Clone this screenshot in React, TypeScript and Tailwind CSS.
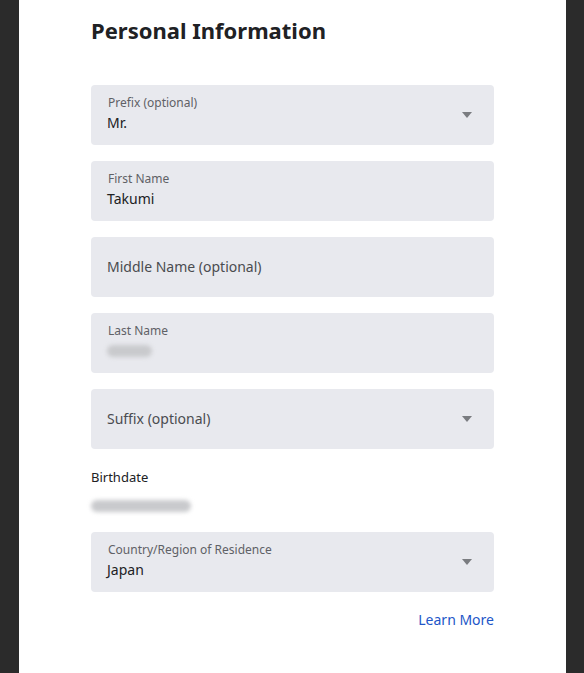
import { ReactNode } from "react";

function Caret() {
  return (
    <svg width="10" height="6" viewBox="0 0 10 6" className="shrink-0">
      <path d="M0 0h10L5 6z" fill="#7a7c80" />
    </svg>
  );
}

function Blur({ w }: { w: number }) {
  return (
    <span
      className="inline-block h-[12px] rounded-full bg-[#c9cacd] blur-[2px]"
      style={{ width: w }}
    />
  );
}

function Field({
  label,
  value,
  select,
}: {
  label?: string;
  value?: ReactNode;
  select?: boolean;
}) {
  return (
    <div className="h-[60px] rounded-[4px] bg-[#e8e9ee] pl-[16px] pr-[22px] flex items-center">
      <div className="flex-1 min-w-0">
        {value !== undefined ? (
          <>
            <p className="text-[12px] leading-[16px] text-[#5f6166] pl-px -mt-[2px]">{label}</p>
            <div className="text-[14px] leading-[20px] text-[#202124] mt-[2px] h-[20px] flex items-center">
              {value}
            </div>
          </>
        ) : (
          <p className="text-[14px] leading-[20px] text-[#4a4c50]">{label}</p>
        )}
      </div>
      {select && <Caret />}
    </div>
  );
}

export default function App() {
  return (
    <div className="min-h-[673px] bg-[#2b2b2b] pl-[19px] pr-[18px] flex font-['Noto_Sans',sans-serif]">
      <div className="flex-1 bg-white pl-[72px] pr-[72px] pt-[15px] pb-[40px]">
        <h1 className="text-[22px] leading-[30px] font-bold text-[#202124]">Personal Information</h1>
        <div className="mt-[40px] flex flex-col gap-[16px]">
          <Field label="Prefix (optional)" value="Mr." select />
          <Field label="First Name" value="Takumi" />
          <Field label="Middle Name (optional)" />
          <Field label="Last Name" value={<Blur w={45} />} />
          <Field label="Suffix (optional)" select />
        </div>
        <div className="mt-[19px]">
          <p className="text-[13px] leading-[18px] text-[#202124]">Birthdate</p>
          <div className="mt-[10px] h-[20px] flex items-center">
            <Blur w={100} />
          </div>
        </div>
        <div className="mt-[16px]">
          <Field label="Country/Region of Residence" value="Japan" select />
        </div>
        <div className="mt-[18px] flex justify-end">
          <a className="text-[14px] leading-[20px] text-[#2156c8]" href="#">
            Learn More
          </a>
        </div>
      </div>
    </div>
  );
}
